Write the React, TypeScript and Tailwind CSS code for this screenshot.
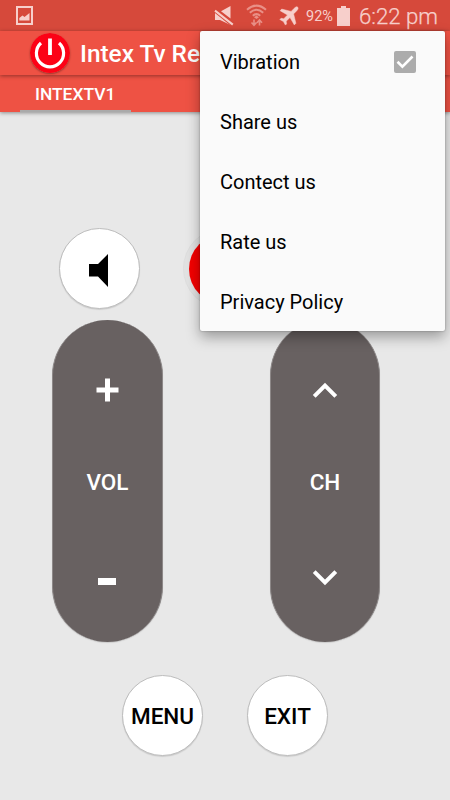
import React from "react";

const round =
  "flex size-[81px] items-center justify-center rounded-full border border-[#bdbdbd] bg-white shadow-[0_1px_1px_rgba(0,0,0,0.12)]";

const pill =
  "flex h-[322px] flex-col items-center rounded-full border-x border-[#8d8888] bg-[#686161] text-white shadow-[0_1px_1px_rgba(0,0,0,0.12)]";

function StatusBar() {
  return (
    <div className="flex h-[31px] items-center bg-[#d6493b] text-[#f7cfcb]">
      <svg className="ml-4 h-[19px] w-[17px] shrink-0" viewBox="0 0 17 19">
        <rect x="1" y="1" width="15" height="17" fill="none" stroke="currentColor" strokeWidth="2" />
        <path d="M3.3 14.5V12L6.5 9.5L8.5 11L13.5 7V14.5Z" fill="currentColor" />
      </svg>
      <svg className="ml-[181px] h-5 w-5 shrink-0" viewBox="0 0 20 20">
        <path d="M7 5.2L16.5 0V12.6Z" fill="currentColor" />
        <path d="M1 5V14H6L16.5 19V17.6Z" fill="currentColor" />
        <path d="M1 4.2L18.5 18.2" stroke="#d6493b" strokeWidth="4.4" />
        <path d="M1 4.6L18.8 18.6" stroke="currentColor" strokeWidth="2" />
      </svg>
      <svg className="ml-3 h-[23px] w-[21px] shrink-0 text-[#e99087]" viewBox="0 0 21 23" fill="none" stroke="currentColor">
        <path d="M1 5.8Q10.5-2.5 20 5.8M3.8 8.7Q10.5 2.8 17.2 8.7M6.8 11.7Q10.5 8.5 14.2 11.7" strokeWidth="2" />
        <path d="M8 13.2L10.5 11.5L13 13.2L10.5 15Z" fill="currentColor" stroke="none" />
        <path d="M8 15.5V21M5.5 18.5L8 21.3L10.5 18.5M13.5 21.5V16M11 18.7L13.5 16L16 18.7" strokeWidth="1.6" />
      </svg>
      <svg className="ml-[12px] h-[20px] w-[20px] shrink-0" viewBox="0 0 20 20" fill="currentColor" stroke="currentColor" strokeWidth="0.5">
        <path d="M18.7 1.2C19.6 2.1 18.9 3.6 17.8 4.7L14.6 7.9L16.9 17.3L15.3 18.9L11 11.5L7.2 15.2L7.6 17.9L6.4 19.1L4.4 15.5L.8 13.5L2 12.3L4.8 12.7L8.5 9L1.1 4.7L2.7 3.1L12.1 5.4L15.3 2.2C16.4 1.1 17.9.3 18.7 1.2Z" />
      </svg>
      <span className="ml-[7px] w-[29px] shrink-0 pt-[2px] text-[14.5px]">92%</span>
      <svg className="ml-[2px] h-5 w-[13px] shrink-0" viewBox="0 0 13 20" fill="currentColor">
        <path d="M4 0H9V2H13V20H0V2H4Z" />
      </svg>
      <span className="ml-[9px] whitespace-nowrap pt-[2px] text-[22.2px] font-light leading-[29px] [-webkit-text-stroke:0.25px_#f7cfcb]">6:22 pm</span>
    </div>
  );
}

function Menu() {
  return (
    <div className="absolute left-[200px] top-[31px] flex h-[300px] w-[245px] flex-col rounded-[2px] bg-[#fafafa] text-[20px] text-black shadow-[0_6px_14px_rgba(0,0,0,0.34),0_0_2px_rgba(0,0,0,0.35)]">
      <div className="flex h-[60px] items-center justify-between pl-5 pr-[29px] pt-px">
        <span>Vibration</span>
        <svg className="size-[22px]" viewBox="0 0 22 22">
          <rect width="22" height="22" rx="2" fill="#acacac" />
          <path d="M3.5 10.8L8.4 15.6L18.5 5.5" fill="none" stroke="#fff" strokeWidth="2.6" />
        </svg>
      </div>
      {["Share us", "Contect us", "Rate us", "Privacy Policy"].map((label) => (
        <div key={label} className="flex h-[60px] items-center pl-5 pt-px">
          {label}
        </div>
      ))}
    </div>
  );
}

export default function App() {
  return (
    <div className="relative flex h-[800px] w-[450px] flex-col overflow-hidden bg-[#e8e8e8] font-['Roboto',sans-serif]">
      <StatusBar />
      <header className="z-10 flex h-11 shrink-0 items-center bg-[#ee5244] pl-[30px] shadow-[0_1px_4px_rgba(0,0,0,0.4)]">
        <svg className="size-10 shrink-0 rounded-full shadow-[0_1px_2px_rgba(0,0,0,0.35)]" viewBox="0 0 40 40">
          <circle cx="20" cy="20" r="20" fill="#fc0216" />
          <path d="M11 10A13.6 13.6 0 1 0 29 10" fill="none" stroke="#fff" strokeWidth="3.2" />
          <path d="M20 5.5V22" stroke="#fff" strokeWidth="3.8" />
        </svg>
        <h1 className="ml-[10px] whitespace-nowrap pt-[2px] text-[24.4px] font-medium text-white">Intex Tv Re</h1>
      </header>
      <nav className="flex h-[37px] shrink-0 bg-[#ee5244] pl-5 shadow-[0_1px_4px_rgba(0,0,0,0.4)]">
        <div className="flex h-[37px] w-[111px] items-center border-b-2 border-[#aaa] pl-[15px] pt-[4px] text-[17.4px] font-medium text-white">
          INTEXTV1
        </div>
      </nav>
      <main className="flex flex-col">
        <div className="mt-[116px] flex gap-[43px] pl-[59px]">
          <button className={round}>
            <svg className="mr-[2px] mt-[3px] h-[33px] w-[19px]" viewBox="0 0 19 33">
              <path d="M0 10H9L19 0V33L9 22.5H0Z" />
            </svg>
          </button>
          <div className="flex size-[81px] items-center justify-center rounded-full border border-[#dedede] bg-[#e2e2e2]">
            <div className="size-[70px] rounded-full bg-[#f40000]" />
          </div>
        </div>
        <div className="mt-[11px] flex gap-[107px] pl-[52px]">
          <div className={`${pill} w-[111px]`}>
            <svg className="mt-[58px] h-6 w-[23px]" viewBox="0 0 23 24">
              <path d="M0.5 12H22.5M11.5 0.5V23.5" stroke="currentColor" strokeWidth="5" />
            </svg>
            <span className="mt-[62px] text-[22.5px] font-medium leading-9">VOL</span>
            <div className="mr-px mt-[78px] h-[7px] w-[18px] bg-white" />
          </div>
          <div className={`${pill} w-[110px]`}>
            <svg className="mt-[62px] h-4 w-[26px]" viewBox="0 0 26 16">
              <path d="M2.2 14.3L13 3.5L23.8 14.3" fill="none" stroke="currentColor" strokeWidth="4" />
            </svg>
            <span className="mt-[66px] text-[22.5px] font-medium leading-9">CH</span>
            <svg className="mt-[70px] h-4 w-[26px]" viewBox="0 0 26 16">
              <path d="M2.2 1.7L13 12.5L23.8 1.7" fill="none" stroke="currentColor" strokeWidth="4" />
            </svg>
          </div>
        </div>
        <div className="mt-[33px] flex gap-[44px] pl-[122px] text-[22.5px] font-medium text-black">
          <button className={`${round} pt-[2px]`}>MENU</button>
          <button className={`${round} pt-[2px]`}>EXIT</button>
        </div>
      </main>
      <div className="absolute inset-0 z-20">
        <Menu />
      </div>
    </div>
  );
}
